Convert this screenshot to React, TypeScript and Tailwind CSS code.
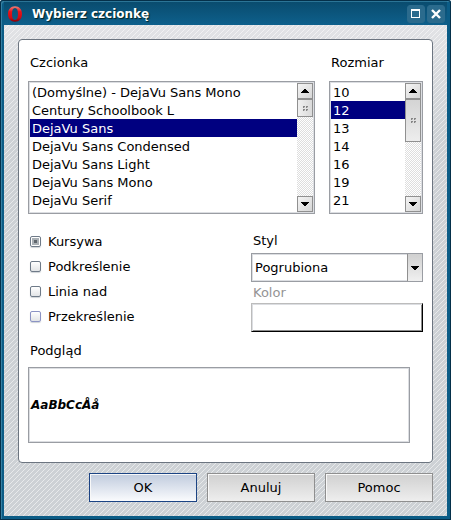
import React, { useState } from 'react';

const FONTS = [
  '(Domyślne) - DejaVu Sans Mono',
  'Century Schoolbook L',
  'DejaVu Sans',
  'DejaVu Sans Condensed',
  'DejaVu Sans Light',
  'DejaVu Sans Mono',
  'DejaVu Serif',
];
const SIZES = ['10', '12', '13', '14', '16', '19', '21'];
const EFFECTS = [
  { name: 'Kursywa', border: 'border-[#6e7a88]' },
  { name: 'Podkreślenie', border: 'border-[#6e7a88]' },
  { name: 'Linia nad', border: 'border-[#6e7a88]' },
  { name: 'Przekreślenie', border: 'border-[#8b93c4]' },
];

const Arrow = ({ up = false }: { up?: boolean }) => (
  <svg width="8" height="4" viewBox="0 0 8 4" shapeRendering="crispEdges" fill="#000">
    {up ? <path d="M3 0h2v1h1v1h1v1h1v1H0V3h1V2h1V1h1z" /> : <path d="M0 0h8v1H7v1H6v1H5v1H3V3H2V2H1V1H0z" />}
  </svg>
);

const barButton =
  'flex h-4 w-4 shrink-0 items-center justify-center border border-[#909090] bg-linear-to-br from-[#f4f4f4] to-[#d6d6d6]';

interface ListProps {
  id: string;
  label: string;
  items: string[];
  initial: string;
  thumbClass: string;
}

const FontList = ({ id, label, items, initial, thumbClass }: ListProps) => {
  const [value, setValue] = useState(initial);
  return (
    <div>
      <label htmlFor={id} className="block h-[34px] pt-2 pl-0.5 leading-4">
        {label}
      </label>
      <div className="flex border border-[#9a9da3] bg-white shadow-[inset_0_0_0_1px_#dcdee2]">
        <select
          id={id}
          size={7}
          value={value}
          onChange={(e) => setValue(e.target.value)}
          className="my-px ml-px h-[129px] min-w-0 flex-1 appearance-none overflow-hidden border-0 bg-transparent p-0 outline-none [scrollbar-width:none]"
        >
          {items.map((item) => (
            <option
              key={item}
              value={item}
              className="h-[18px] px-0.5 pt-0.5 pb-0 leading-[18px] text-black checked:bg-[#000080] checked:bg-[linear-gradient(#000080,#000080)] checked:text-white"
            >
              {item}
            </option>
          ))}
        </select>
        <div className="my-px mr-px flex w-4 flex-col bg-[repeating-conic-gradient(#dedede_0_25%,#fff_0_50%)] bg-size-[2px_2px]">
          <button type="button" aria-label="W górę" className={barButton}>
            <Arrow up />
          </button>
          <div className={thumbClass}>
            <div className="grid grid-cols-2 gap-px">
              {[0, 1, 2, 3].map((dot) => (
                <span key={dot} className="h-0.5 w-0.5 border-t border-l border-[#858585] bg-[#c4c4c4]" />
              ))}
            </div>
          </div>
          <div className="flex-1" />
          <button type="button" aria-label="W dół" className={barButton}>
            <Arrow />
          </button>
        </div>
      </div>
    </div>
  );
};

const plainButton = 'border-[#8f8f8f] from-[#d0d0d0] to-[#eeeeee]';
const defaultButton = 'border-[#1c4484] from-[#c0cbdd] to-[#fafbfd]';

const DialogButton = ({ text, look }: { text: string; look: string }) => (
  <button
    type="button"
    className={`h-[29px] max-w-[108px] flex-1 border bg-linear-to-b shadow-[inset_1px_1px_0_#f8f8f8] ${look}`}
  >
    {text}
  </button>
);

const OperaLogo = () => (
  <svg width="16" height="16" viewBox="0 0 16 16">
    <defs>
      <linearGradient id="ring" x1="0" y1="0" x2="0" y2="1">
        <stop offset="0" stopColor="#f08078" />
        <stop offset="0.35" stopColor="#e8121a" />
        <stop offset="0.75" stopColor="#d00a12" />
        <stop offset="1" stopColor="#800008" />
      </linearGradient>
    </defs>
    <path
      fill="url(#ring)"
      fillRule="evenodd"
      d="M8 0.3c4.300 0 7 3.200 7 7.700s-2.700 7.700-7 7.700S1 12.500 1 8s2.700-7.700 7-7.700zM8 2C5.900 2 5 4.300 5 8s.9 6 3 6 3-2.300 3-6-.9-6-3-6z"
    />
  </svg>
);

const windowButton =
  'flex h-[18px] w-[18px] items-center justify-center rounded-[3px] border border-[#2b6b8d] bg-[#2b6b8d]';

export default function App() {
  const [checked, setChecked] = useState<string[]>(['Kursywa']);

  const toggle = (name: string) =>
    setChecked(checked.includes(name) ? checked.filter((c) => c !== name) : [...checked, name]);

  return (
    <div className="rounded-t-[3px] bg-[#0b5c86] px-1 pb-1 font-['DejaVu_Sans',sans-serif] text-[13px] text-black shadow-[inset_0_0_0_1px_#05304a,inset_2px_2px_0_#3580a3]">
      <header className="flex h-[25px] items-center gap-2 bg-linear-to-b from-[#094a6c] to-[#0e608c] pt-[3px] pr-0.5 pl-[3px] shadow-[inset_0_1px_0_#05304a,inset_0_2px_0_#2b7496]">
        <OperaLogo />
        <h1 className="flex-1 pl-px text-xs font-bold text-white [text-shadow:1px_1px_1px_#022]">Wybierz czcionkę</h1>
        <div className="flex gap-0.5">
          <button type="button" aria-label="Maksymalizuj" className={windowButton}>
            <svg width="10" height="10" viewBox="0 0 10 10" shapeRendering="crispEdges">
              <path fill="#fff" fillRule="evenodd" d="M0 0h9v9H0zM1 2v6h7V2z" />
            </svg>
          </button>
          <button type="button" aria-label="Zamknij" className={windowButton}>
            <svg width="10" height="10" viewBox="0 0 10 10">
              <path stroke="#fff" strokeWidth="2.400" d="M1 1l8 8M9 1l-8 8" />
            </svg>
          </button>
        </div>
      </header>

      <main className="bg-[linear-gradient(135deg,transparent_42%,#ffffff88_42%_58%,transparent_58%),linear-gradient(#e2e3e6,#cdd1d5_110px)] bg-size-[5px_5px,100%_100%] px-3.5 py-3.5">
        <section className="rounded-[4px] border border-[#6c7580] bg-white px-[9px] pt-[7px] pb-[19px]">
          <div className="grid grid-cols-[minmax(0,1fr)_94px] gap-3.5">
            <FontList
              id="font"
              label="Czcionka"
              items={FONTS}
              initial="DejaVu Sans"
              thumbClass="flex h-[18px] items-center justify-center border border-[#909090] bg-linear-to-r from-[#f0f0f0] to-[#dadada]"
            />
            <FontList
              id="size"
              label="Rozmiar"
              items={SIZES}
              initial="12"
              thumbClass="flex h-[43px] items-center justify-center border border-[#909090] bg-linear-to-b from-[#d4d4d4] to-[#ededed]"
            />
          </div>

          <div className="grid grid-cols-[minmax(0,1fr)_172px] pt-[15px]">
            <div>
              {EFFECTS.map(({ name, border }) => (
                <label key={name} className="flex h-[25px] items-center gap-[7px] pl-0.5">
                  <input
                    type="checkbox"
                    checked={checked.includes(name)}
                    onChange={() => toggle(name)}
                    className={`h-[11px] w-[11px] appearance-none rounded-[2px] border bg-linear-to-b from-white to-[#e2e4e6] shadow-[0_1px_1px_#d0d4d8] checked:bg-[linear-gradient(#5f666d,#5f666d),linear-gradient(#aab0b5,#aab0b5)] checked:bg-size-[3px_3px,7px_7px] checked:bg-center checked:bg-no-repeat ${border}`}
                  />
                  {name}
                </label>
              ))}
            </div>
            <div className="flex flex-col">
              <label htmlFor="style" className="h-6 pl-0.5 leading-6">
                Styl
              </label>
              <div className="relative">
                <select
                  id="style"
                  className="block h-[29px] w-full appearance-none border border-[#9a9da3] bg-white pl-[3px] shadow-[inset_0_0_0_1px_#dcdee2] outline-none"
                >
                  <option>Pogrubiona</option>
                </select>
                <span className="pointer-events-none absolute inset-y-px right-px flex w-[15px] items-center justify-center border-l border-[#909090] bg-linear-to-b from-[#d0d0d0] to-[#f0f0f0]">
                  <Arrow />
                </span>
              </div>
              <label htmlFor="color" className="h-[21px] pl-0.5 leading-[21px] text-[#949494]">
                Kolor
              </label>
              <button
                id="color"
                type="button"
                disabled
                className="h-[29px] border border-t-[#bcbcbc] border-r-black border-b-black border-l-[#bcbcbc] bg-white shadow-[inset_1px_1px_0_#dcdee2,inset_-1px_-1px_0_#8c8c8c]"
              />
            </div>
          </div>

          <h2 className="pt-[11px] pl-0.5 leading-4">Podgląd</h2>
          <div className="mt-2 mr-[13px] flex h-[76px] items-center border border-[#9a9da3] bg-white pl-0.5 text-xs font-bold italic shadow-[inset_0_0_0_1px_#dcdee2]">
            AaBbCcÅå
          </div>
        </section>

        <footer className="flex justify-end gap-2.5 pt-2.5">
          <DialogButton text="OK" look={defaultButton} />
          <DialogButton text="Anuluj" look={plainButton} />
          <DialogButton text="Pomoc" look={plainButton} />
        </footer>
      </main>
    </div>
  );
}
